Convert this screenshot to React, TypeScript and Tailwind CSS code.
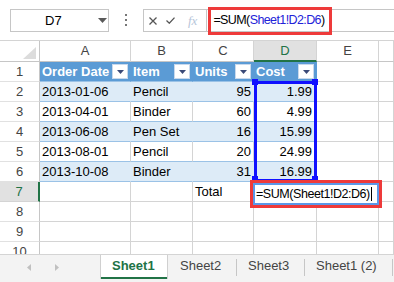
import React from 'react';

const data = [
  ['2013-01-06', 'Pencil', '95', '1.99'],
  ['2013-04-01', 'Binder', '60', '4.99'],
  ['2013-06-08', 'Pen Set', '16', '15.99'],
  ['2013-08-01', 'Pencil', '20', '24.99'],
  ['2013-10-08', 'Binder', '31', '16.99'],
];

const cols = ['A', 'B', 'C', 'D', 'E', 'F'];
const colW = ['w-[91px]', 'w-[62px]', 'w-[61px]', 'w-[63px]', 'w-[62px]', 'w-[15px]'];

function FilterBtn() {
  return (
    <span className="ml-auto mr-[2px] w-[16px] h-[15px] shrink-0 bg-white border border-[#c9d9ec] flex items-center justify-center">
      <svg width="7" height="4" viewBox="0 0 7 4">
        <path d="M0 0h7L3.5 4z" fill="#3b4a78" />
      </svg>
    </span>
  );
}

function RowHead({ n, active }: { n: number; active?: boolean }) {
  return (
    <div
      className={
        active
          ? 'w-[40px] shrink-0 flex items-center justify-center bg-[#e1e1e1] border-r-2 border-r-[#217346] border-b border-b-[#d4d4d4] text-[#217346]'
          : 'w-[40px] shrink-0 flex items-center justify-center border-r border-r-[#c6c6c6] border-b border-b-[#e1e1e1] text-[#444]'
      }
    >
      {n}
    </div>
  );
}

function Blank({ i, children }: { i: number; children?: React.ReactNode }) {
  return (
    <div className={`${colW[i]} shrink-0 flex items-center pl-[2px] border-r border-b border-[#d4d4d4] whitespace-nowrap`}>
      {children}
    </div>
  );
}

function DataRow({ n, r }: { n: number; r: string[] }) {
  const band = n % 2 === 0;
  const cell = band
    ? 'bg-[#ddebf7] border-r-[#ddebf7] border-b-[#9bc2e6]'
    : 'bg-white border-r-[#d4d4d4] border-b-[#9bc2e6]';
  return (
    <div className="flex h-[20px]">
      <RowHead n={n} />
      <div className={`w-[91px] shrink-0 flex items-center pl-[2px] border-r border-b ${cell}`}>{r[0]}</div>
      <div className={`w-[62px] shrink-0 flex items-center pl-[2px] border-r border-b ${cell}`}>{r[1]}</div>
      <div className={`w-[61px] shrink-0 flex items-center justify-end pr-[2px] border-r border-b ${cell}`}>{r[2]}</div>
      <div className={`w-[63px] shrink-0 flex items-center justify-end pr-[4px] border-r border-b ${cell}`}>{r[3]}</div>
      <Blank i={4} />
      <Blank i={5} />
    </div>
  );
}

export default function App() {
  return (
    <div className="relative w-[394px] h-[282px] overflow-hidden bg-white font-['Liberation_Sans',Arial,sans-serif] text-[13px] text-black select-none">
      {/* name box + formula bar */}
      <div className="h-[41px] flex items-start pt-[9px] border-b border-[#d4d4d4]">
        <div className="ml-[10px] w-[99px] h-[23px] border border-[#c6c6c6] flex items-center">
          <span className="ml-[34px] text-[13px]">D7</span>
          <svg className="ml-auto mr-[1px]" width="9" height="5" viewBox="0 0 9 5">
            <path d="M0 0h9L4.5 5z" fill="#595959" />
          </svg>
        </div>
        <div className="ml-[16px] mt-[5px] flex flex-col gap-[3px]">
          <span className="block w-[2px] h-[2px] bg-[#777]" />
          <span className="block w-[2px] h-[2px] bg-[#777]" />
          <span className="block w-[2px] h-[2px] bg-[#777]" />
        </div>
        <div className="ml-[16px] flex-1 h-[23px] border border-r-0 border-[#c6c6c6] flex items-center">
          <svg className="ml-[5px]" width="8" height="8" viewBox="0 0 8 8">
            <path d="M0.5 0.5L7.5 7.5M7.5 0.5L0.5 7.5" stroke="#555" strokeWidth="1.3" />
          </svg>
          <svg className="ml-[9px]" width="9" height="7" viewBox="0 0 9 7">
            <path d="M0.5 3.5L3.3 6.2L8.5 0.6" stroke="#555" strokeWidth="1.3" fill="none" />
          </svg>
          <span className="ml-[13px] italic font-['Liberation_Serif',serif] text-[13px] text-[#b7c6da]">fx</span>
          <div className="ml-[9px] h-full flex-1 border-l border-[#c6c6c6] flex items-center pl-[6px] text-[12.5px] tracking-[-0.6px] whitespace-nowrap">
            <span>=SUM(</span>
            <span className="text-[#2222d8]">Sheet1!D2:D6</span>
            <span>)</span>
          </div>
        </div>
      </div>

      {/* sheet grid */}
      <div className="h-[213px] overflow-hidden">
        <div className="flex h-[21px]">
          <div className="w-[40px] shrink-0 relative border-r border-b border-[#c6c6c6]">
            <svg className="absolute left-[23px] top-[6px]" width="13" height="12" viewBox="0 0 13 12">
              <path d="M13 0V12H0z" fill="#dcdcdc" />
            </svg>
          </div>
          {cols.map((c, i) =>
            c === 'D' ? (
              <div key={c} className="w-[63px] shrink-0 flex items-center justify-center bg-[#e1e1e1] text-[#217346] border-r border-r-[#d4d4d4] border-b-2 border-b-[#217346]">
                D
              </div>
            ) : (
              <div key={c} className={`${colW[i]} shrink-0 flex items-center justify-center text-[#444] border-r border-r-[#d4d4d4] border-b border-b-[#c6c6c6]`}>
                {c === 'F' ? '' : c}
              </div>
            )
          )}
        </div>

        {/* table header */}
        <div className="flex h-[20px]">
          <RowHead n={1} />
          <div className="w-[91px] shrink-0 flex items-center pl-[2px] bg-[#5b9bd5] text-white font-bold border-r border-r-[#5b9bd5] border-b border-b-[#9bc2e6]">
            Order Date<FilterBtn />
          </div>
          <div className="w-[62px] shrink-0 flex items-center pl-[2px] bg-[#5b9bd5] text-white font-bold border-r border-r-[#5b9bd5] border-b border-b-[#9bc2e6]">
            Item<FilterBtn />
          </div>
          <div className="w-[61px] shrink-0 flex items-center pl-[2px] bg-[#5b9bd5] text-white font-bold border-r border-r-[#5b9bd5] border-b border-b-[#9bc2e6]">
            Units<FilterBtn />
          </div>
          <div className="w-[63px] shrink-0 flex items-center pl-[2px] bg-[#5b9bd5] text-white font-bold border-r border-r-[#5b9bd5] border-b border-b-[#9bc2e6]">
            Cost<FilterBtn />
          </div>
          <Blank i={4} />
          <Blank i={5} />
        </div>

        {data.map((r, k) => (
          <DataRow key={k} n={k + 2} r={r} />
        ))}

        <div className="flex h-[20px]">
          <RowHead n={7} active />
          <Blank i={0} />
          <Blank i={1} />
          <Blank i={2}>Total</Blank>
          <Blank i={3} />
          <Blank i={4} />
          <Blank i={5} />
        </div>
        {[8, 9, 10].map((n) => (
          <div key={n} className="flex h-[20px]">
            <RowHead n={n} />
            {cols.map((c, i) => (
              <Blank key={c} i={i} />
            ))}
          </div>
        ))}
      </div>

      {/* sheet tabs */}
      <div className="h-[28px] flex items-start bg-[#f3f3f3] border-t border-[#d4d4d4] text-[13px] text-[#444] whitespace-nowrap">
        <div className="w-[100px] h-full flex items-center pb-[3px]">
          <svg className="ml-[27px]" width="4" height="7" viewBox="0 0 4 7">
            <path d="M4 0V7L0 3.5z" fill="#c0c0c0" />
          </svg>
          <svg className="ml-[24px]" width="4" height="7" viewBox="0 0 4 7">
            <path d="M0 0V7L4 3.5z" fill="#c0c0c0" />
          </svg>
        </div>
        <div className="w-[68px] h-[24px] flex flex-col bg-white border-x border-[#d0d0d0]">
          <div className="flex-1 flex items-center pl-[11px] font-bold text-[#217346]">Sheet1</div>
          <div className="h-[2px] bg-[#217346]" />
        </div>
        <div className="w-[68px] h-[24px] flex items-center pl-[12px] pb-[2px]">Sheet2</div>
        <span className="w-px h-[17px] mt-[4px] bg-[#c6c6c6]" />
        <div className="w-[67px] h-[24px] flex items-center pl-[11px] pb-[2px]">Sheet3</div>
        <span className="w-px h-[17px] mt-[4px] bg-[#c6c6c6]" />
        <div className="w-[87px] h-[24px] flex items-center pl-[11px] pb-[2px]">Sheet1 (2)</div>
        <span className="w-px h-[17px] mt-[4px] bg-[#c6c6c6]" />
      </div>

      {/* referenced range D2:D6 */}
      <div className="absolute left-[254px] top-[81px] w-[63px] h-[101px] border-[3px] border-[#1010ff]" />
      <span className="absolute left-[252px] top-[79px] w-[6px] h-[6px] bg-[#1010ff]" />
      <span className="absolute left-[312px] top-[79px] w-[6px] h-[6px] bg-[#1010ff]" />
      <span className="absolute left-[252px] top-[176px] w-[6px] h-[6px] bg-[#1010ff]" />
      <span className="absolute left-[312px] top-[176px] w-[6px] h-[6px] bg-[#1010ff]" />

      {/* cell D7 in edit mode */}
      <div className="absolute left-[250px] top-[180px] w-[132px] h-[28px] border-[3px] border-[#ee3a3a]">
        <div className="w-full h-full bg-white border-2 border-[#5b97e8] flex items-center pl-[1px] text-[12.5px] tracking-[-0.45px] whitespace-nowrap">
          <span>=SUM(Sheet1!D2:D6)</span>
          <span className="ml-[1px] w-px h-[14px] bg-black" />
        </div>
      </div>

      {/* formula highlight */}
      <div className="absolute left-[208px] top-[7px] w-[124px] h-[28px] border-[3px] border-[#ee3a3a]" />
    </div>
  );
}
